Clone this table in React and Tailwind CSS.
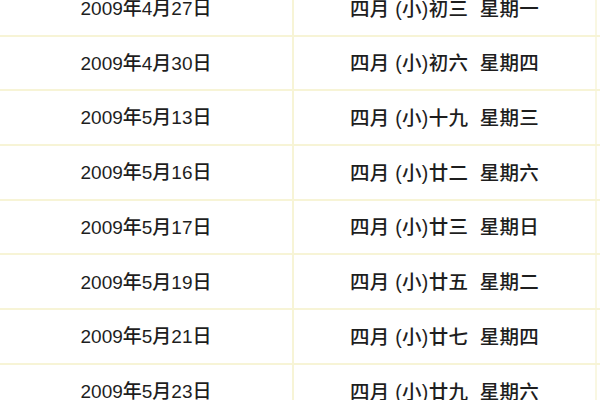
import React from "react";

const rows = [
  ["2009年4月27日", "四月 (小)初三  星期一"],
  ["2009年4月30日", "四月 (小)初六  星期四"],
  ["2009年5月13日", "四月 (小)十九  星期三"],
  ["2009年5月16日", "四月 (小)廿二  星期六"],
  ["2009年5月17日", "四月 (小)廿三  星期日"],
  ["2009年5月19日", "四月 (小)廿五  星期二"],
  ["2009年5月21日", "四月 (小)廿七  星期四"],
  ["2009年5月23日", "四月 (小)廿九  星期六"],
];

export default function App() {
  return (
    <div
      className="w-[600px] h-[400px] overflow-hidden bg-white text-[#1e1e1e]"
      style={{ fontFamily: '"Liberation Sans", "Noto Sans CJK SC", sans-serif' }}
    >
      <div className="-mt-[18px] flex flex-col">
        {rows.map(([date, lunar], i) => (
          <div
            key={i}
            className="flex h-[54.7px] border-b-2 border-[#f7f4d6]"
          >
            <div className="w-[294px] flex items-center justify-center pt-[2px] border-r-2 border-[#f7f4d6] text-[19px] font-medium">
              {date}
            </div>
            <div className="w-[303px] flex items-center justify-center pt-[2px] border-r-2 border-[#f9f7e2] text-[19.5px] font-medium tracking-[0.3px] whitespace-pre">
              {lunar}
            </div>
          </div>
        ))}
      </div>
    </div>
  );
}
